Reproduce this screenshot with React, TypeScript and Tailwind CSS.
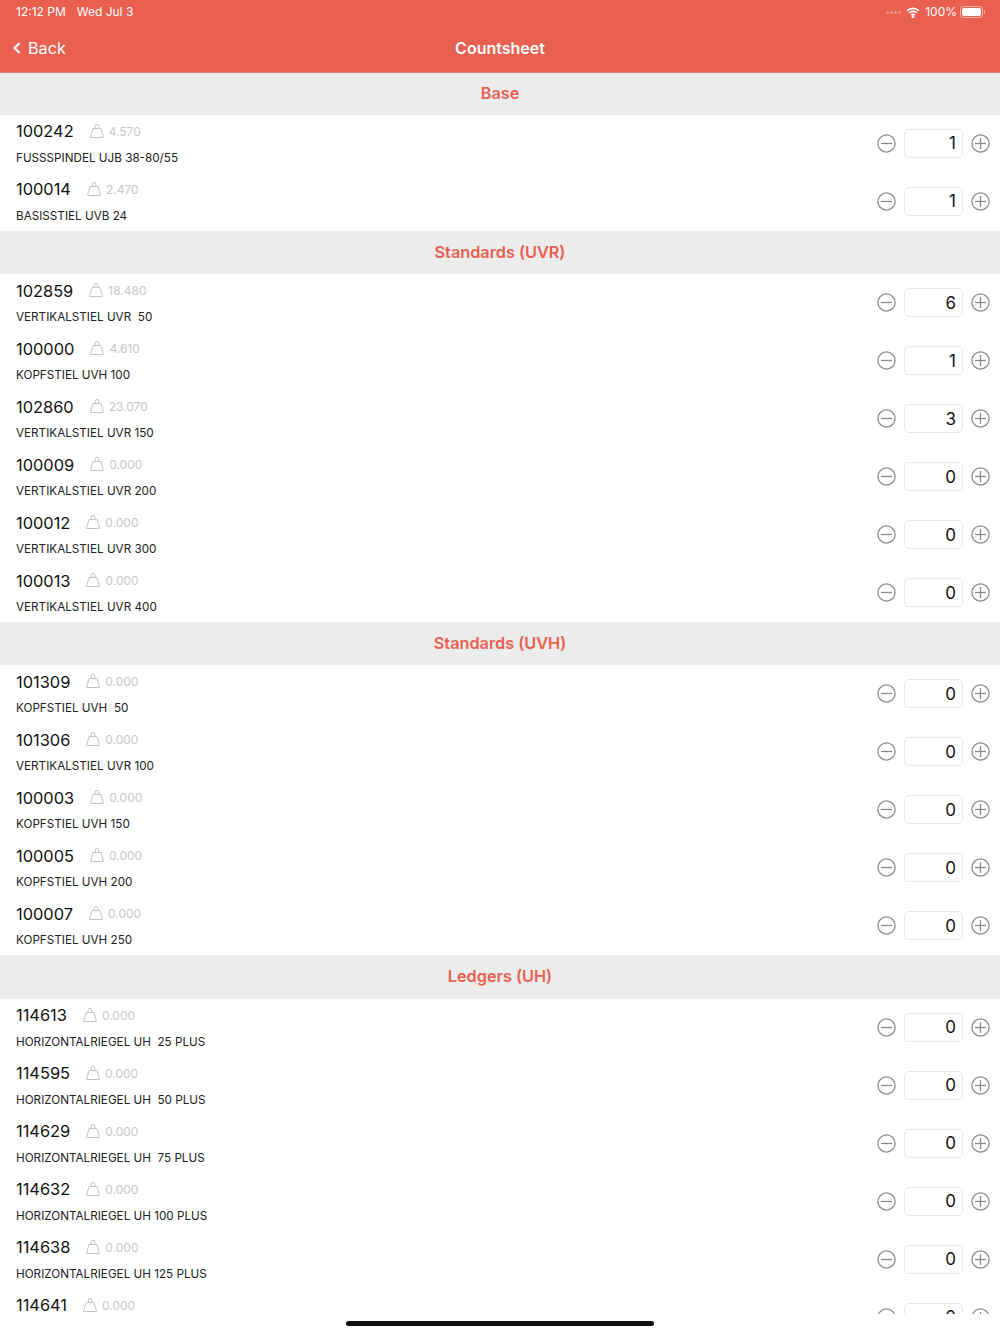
type Item = { code: string; weight: string; name: string; qty: number };
type Section = { title: string; items: Item[] };

const sections: Section[] = [
  {
    title: "Base",
    items: [
      { code: "100242", weight: "4.570", name: "FUSSSPINDEL UJB 38-80/55", qty: 1 },
      { code: "100014", weight: "2.470", name: "BASISSTIEL UVB 24", qty: 1 },
    ],
  },
  {
    title: "Standards (UVR)",
    items: [
      { code: "102859", weight: "18.480", name: "VERTIKALSTIEL UVR  50", qty: 6 },
      { code: "100000", weight: "4.610", name: "KOPFSTIEL UVH 100", qty: 1 },
      { code: "102860", weight: "23.070", name: "VERTIKALSTIEL UVR 150", qty: 3 },
      { code: "100009", weight: "0.000", name: "VERTIKALSTIEL UVR 200", qty: 0 },
      { code: "100012", weight: "0.000", name: "VERTIKALSTIEL UVR 300", qty: 0 },
      { code: "100013", weight: "0.000", name: "VERTIKALSTIEL UVR 400", qty: 0 },
    ],
  },
  {
    title: "Standards (UVH)",
    items: [
      { code: "101309", weight: "0.000", name: "KOPFSTIEL UVH  50", qty: 0 },
      { code: "101306", weight: "0.000", name: "VERTIKALSTIEL UVR 100", qty: 0 },
      { code: "100003", weight: "0.000", name: "KOPFSTIEL UVH 150", qty: 0 },
      { code: "100005", weight: "0.000", name: "KOPFSTIEL UVH 200", qty: 0 },
      { code: "100007", weight: "0.000", name: "KOPFSTIEL UVH 250", qty: 0 },
    ],
  },
  {
    title: "Ledgers (UH)",
    items: [
      { code: "114613", weight: "0.000", name: "HORIZONTALRIEGEL UH  25 PLUS", qty: 0 },
      { code: "114595", weight: "0.000", name: "HORIZONTALRIEGEL UH  50 PLUS", qty: 0 },
      { code: "114629", weight: "0.000", name: "HORIZONTALRIEGEL UH  75 PLUS", qty: 0 },
      { code: "114632", weight: "0.000", name: "HORIZONTALRIEGEL UH 100 PLUS", qty: 0 },
      { code: "114638", weight: "0.000", name: "HORIZONTALRIEGEL UH 125 PLUS", qty: 0 },
      // scrolled off below the name line
      { code: "114641", weight: "0.000", name: "", qty: 0 },
    ],
  },
];

function WeightIcon() {
  return (
    <svg width="14" height="14" viewBox="0 0 14 14" fill="none" stroke="#c4c4c4" strokeWidth="1" className="shrink-0">
      <path d="M3 4.5h8l2.4 8.6a.3.3 0 0 1-.3.4H.9a.3.3 0 0 1-.3-.4z" strokeLinejoin="round" />
      <path d="M5.2 4.5V2.2a1.8 1.8 0 0 1 3.6 0v2.3" />
    </svg>
  );
}

function RoundButton({ plus }: { plus?: boolean }) {
  return (
    <svg width="19" height="19" viewBox="0 0 19 19" fill="none" stroke="#8a8a8a" strokeWidth="1.3" className="shrink-0">
      <circle cx="9.5" cy="9.5" r="8.6" />
      <path d="M4 9.5h11" />
      {plus && <path d="M9.5 4v11" />}
    </svg>
  );
}

function Row({ item }: { item: Item }) {
  return (
    <div className="flex h-[58px] items-center justify-between pl-4 pr-[10px]">
      <div className="flex h-full flex-col">
        <div className="flex h-[33px] items-center">
          <span className="text-[16.4px] leading-none text-[#111111]">{item.code}</span>
          <span className="ml-4 -mt-[1px]">
            <WeightIcon />
          </span>
          <span className="ml-[5px] pt-[1px] text-[12px] leading-none text-[#c8c8c8]">{item.weight}</span>
        </div>
        <div className="mt-[2px] whitespace-pre text-[11.7px] leading-4 text-[#222222]">{item.name}</div>
      </div>
      <div className="flex items-center gap-2 pb-[1px]">
        <RoundButton />
        <div className="flex h-[29px] w-[59px] items-center justify-end rounded-[5px] border border-[#e8e8e8] pr-[6px] pt-[1px] text-[17px] text-[#111111]">
          {item.qty}
        </div>
        <RoundButton plus />
      </div>
    </div>
  );
}

function StatusBar() {
  return (
    <div className="flex h-6 items-center justify-between pl-4 pr-[15px] text-[12px] text-white">
      <div className="flex gap-[11px]">
        <span>12:12 PM</span>
        <span>Wed Jul 3</span>
      </div>
      <div className="flex items-center">
        <div className="mr-[5px] flex gap-[1px]">
          <i className="h-[3px] w-[3px] rounded-full bg-white/30" />
          <i className="h-[3px] w-[3px] rounded-full bg-white/30" />
          <i className="h-[3px] w-[3px] rounded-full bg-white/30" />
          <i className="h-[3px] w-[3px] rounded-full bg-white/30" />
        </div>
        <svg width="14" height="11" viewBox="0 0 14 11" fill="none" stroke="white" strokeWidth="1.7" className="mr-[5px]">
          <path d="M1 3.8a8.6 8.6 0 0 1 12 0" />
          <path d="M3.2 6a5.4 5.4 0 0 1 7.6 0" />
          <path d="M5.3 8.1a2.4 2.4 0 0 1 3.4 0" />
          <circle cx="7" cy="9.8" r=".6" fill="white" />
        </svg>
        <span>100%</span>
        <div className="ml-[3px] flex items-center">
          <div className="h-[12px] w-[23px] rounded-[3.5px] border border-white/50 p-[1px]">
            <div className="h-full w-full rounded-[2px] bg-white" />
          </div>
          <div className="ml-[1px] h-[4px] w-[1px] bg-white/50" />
        </div>
      </div>
    </div>
  );
}

export default function App() {
  return (
    <div className="flex h-[1334px] w-[1000px] flex-col overflow-hidden bg-white font-['Inter',sans-serif]">
      <header className="h-[73px] shrink-0 border-b border-[#d9867b] bg-[#e96050]">
        <StatusBar />
        <div className="relative flex h-[47px] items-center justify-center">
          <div className="absolute left-[13px] top-[12px] flex items-center text-white">
            <svg width="8" height="12" viewBox="0 0 8 12" fill="none" stroke="white" strokeWidth="2.2">
              <path d="M6.6 1 1.6 6l5 5" />
            </svg>
            <span className="ml-[7px] text-[16.2px]">Back</span>
          </div>
          <h1 className="text-[16px] font-semibold text-white">Countsheet</h1>
        </div>
      </header>
      <main className="h-[1241px] shrink-0 overflow-hidden">
        {sections.map((s, i) => (
          <section key={s.title}>
            <h2
              className={
                i === 0
                  ? "flex h-[42.15px] items-center justify-center bg-[#ececec] pb-[1px] text-[16.25px] font-semibold text-[#e96050]"
                  : "flex h-[43.15px] items-center justify-center bg-[#ececec] pb-[1px] text-[16.25px] font-semibold text-[#e96050]"
              }
            >
              {s.title}
            </h2>
            {s.items.map((item) => (
              <Row key={item.code} item={item} />
            ))}
          </section>
        ))}
      </main>
      <footer className="flex flex-1 justify-center pt-[7px]">
        <div className="h-[5px] w-[308px] rounded-full bg-[#111111]" />
      </footer>
    </div>
  );
}
